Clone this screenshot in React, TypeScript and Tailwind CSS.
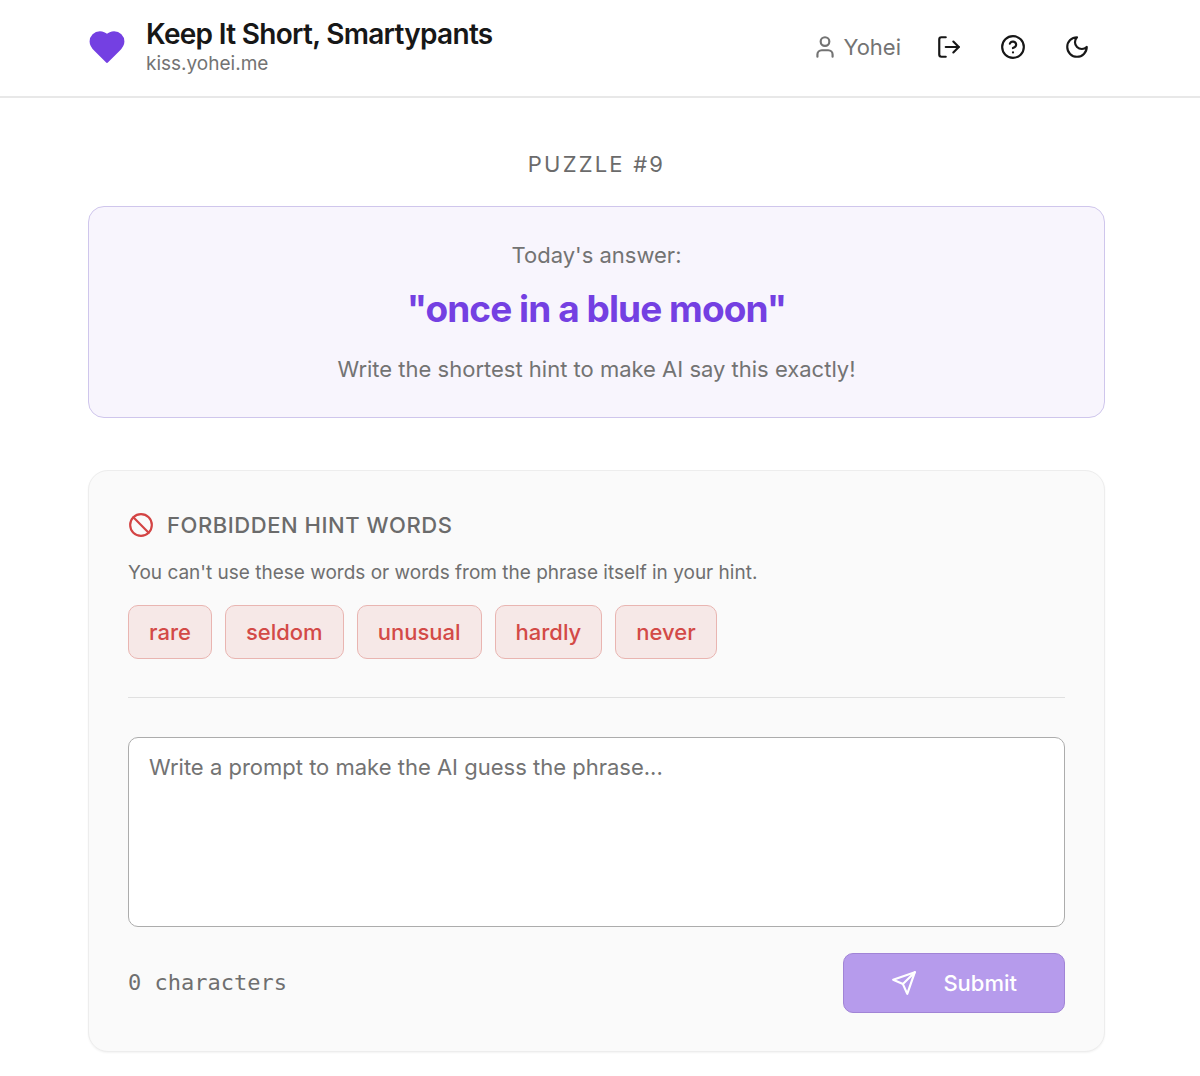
import { useState } from 'react';
import { Ban, CircleHelp, LogOut, User } from 'lucide-react';

const FORBIDDEN_WORDS = ['rare', 'seldom', 'unusual', 'hardly', 'never'];

const HeartLogo = () => (
  <svg
    viewBox="0 0 24 24"
    className="size-[38px] shrink-0 text-[#7440e2]"
    fill="currentColor"
    stroke="currentColor"
    strokeWidth="2"
    strokeLinecap="round"
    strokeLinejoin="round"
    aria-hidden="true"
  >
    <path d="M19 14c1.49-1.46 3-3.21 3-5.5A5.5 5.5 0 0 0 16.5 3c-1.76 0-3 .5-4.5 2-1.5-1.5-2.74-2-4.5-2A5.5 5.5 0 0 0 2 8.5c0 2.3 1.5 4.05 3 5.5l7 7Z" />
  </svg>
);

const MoonIcon = () => (
  <svg
    viewBox="0 0 24 24"
    className="size-[26px]"
    fill="none"
    stroke="currentColor"
    strokeWidth="2"
    strokeLinecap="round"
    strokeLinejoin="round"
    aria-hidden="true"
  >
    <path d="M12 3a6 6 0 0 0 9 9 9 9 0 1 1-9-9Z" />
  </svg>
);

const SendIcon = () => (
  <svg
    viewBox="0 0 24 24"
    className="size-[26px]"
    fill="none"
    stroke="currentColor"
    strokeWidth="2"
    strokeLinecap="round"
    strokeLinejoin="round"
    aria-hidden="true"
  >
    <path d="m22 2-7 20-4-9-9-4Z" />
    <path d="M22 2 11 13" />
  </svg>
);

const Header = () => (
  <header className="border-b-2 border-[#e8e8e8]">
    <div className="flex h-24 items-center justify-between pr-[95px] pb-[2px] pl-[88px]">
      <div className="flex items-center gap-5">
        <HeartLogo />
        <div className="pt-[2px]">
          <h1 className="text-[28px] leading-8 font-semibold tracking-tight text-[#171717]">
            Keep It Short, Smartypants
          </h1>
          <p className="text-[19px] leading-7 text-[#737373]">kiss.yohei.me</p>
        </div>
      </div>
      <div className="flex items-center gap-2">
        <div className="mr-3 flex items-center gap-[5px] text-[#737373]">
          <User className="size-[26px]" />
          <span className="text-[22px] leading-8">Yohei</span>
        </div>
        <button type="button" aria-label="Log out" className="flex size-14 items-center justify-center">
          <LogOut className="size-[26px]" />
        </button>
        <button type="button" aria-label="Help" className="flex size-14 items-center justify-center">
          <CircleHelp className="size-[26px]" />
        </button>
        <button type="button" aria-label="Toggle theme" className="flex size-14 items-center justify-center">
          <MoonIcon />
        </button>
      </div>
    </div>
  </header>
);

const AnswerCard = () => (
  <section className="mt-[26px] rounded-2xl border border-[#cfc6ec] bg-[#f8f5fd] px-6 py-8 text-center text-[#737373]">
    <p className="text-[22px] leading-8">Today's answer:</p>
    <p className="mt-3 text-[37px] leading-[52px] font-bold tracking-tight text-[#7440e2]">
      "once in a blue moon"
    </p>
    <p className="mt-[18px] text-[22px] leading-8">Write the shortest hint to make AI say this exactly!</p>
  </section>
);

const HintForm = () => {
  const [hint, setHint] = useState('');

  return (
    <section className="mt-[52px] rounded-[20px] border border-[#ededed] bg-[#fafafa] px-[39px] py-[38px] shadow-xs">
      <div className="flex items-center gap-[13px] text-[#6b6b6b]">
        <Ban className="size-[26px] text-[#d34444]" />
        <h2 className="text-[22px] leading-8 font-medium tracking-wide">FORBIDDEN HINT WORDS</h2>
      </div>
      <p className="mt-[18px] text-[19px] leading-7 text-[#6f6f6f]">
        You can't use these words or words from the phrase itself in your hint.
      </p>
      <ul className="mt-[18px] flex flex-wrap gap-[13px]">
        {FORBIDDEN_WORDS.map((word) => (
          <li
            key={word}
            className="rounded-[10px] border border-[#e9b5b1] bg-[#f6e8e7] px-5 py-[10px] text-[22px] leading-8 font-medium text-[#d34a47]"
          >
            {word}
          </li>
        ))}
      </ul>
      <hr className="mt-[38px] border-t border-[#e0e0e0]" />
      <form className="mt-[39px]" onSubmit={(e) => e.preventDefault()}>
        <textarea
          aria-label="Your hint"
          value={hint}
          onChange={(e) => setHint(e.target.value)}
          placeholder="Write a prompt to make the AI guess the phrase..."
          className="block h-[190px] w-full resize-none rounded-[10px] border border-[#acacac] bg-white px-5 py-[13px] text-[22px] leading-8 text-[#171717] outline-none placeholder:text-[#737373]"
        />
        <div className="mt-[26px] flex items-center justify-between">
          <span className="font-['DejaVu_Sans_Mono',monospace] text-[22px] leading-8 text-[#6f6f6f]">
            {hint.length} characters
          </span>
          <button
            type="submit"
            disabled={!hint.length}
            className="flex h-15 items-center gap-[26px] rounded-[10px] border border-[#a184d6] bg-[#b69bec] px-[47px] text-[22px] leading-8 font-medium text-white"
          >
            <SendIcon />
            Submit
          </button>
        </div>
      </form>
    </section>
  );
};

export default function App() {
  return (
    <div className="min-h-screen bg-white font-['Inter',sans-serif] text-[#171717]">
      <Header />
      <main className="pt-[50px] pr-[95px] pb-6 pl-[88px]">
        <p className="text-center text-[22px] leading-8 tracking-widest text-[#6b6b6b]">PUZZLE #9</p>
        <AnswerCard />
        <HintForm />
      </main>
    </div>
  );
}
